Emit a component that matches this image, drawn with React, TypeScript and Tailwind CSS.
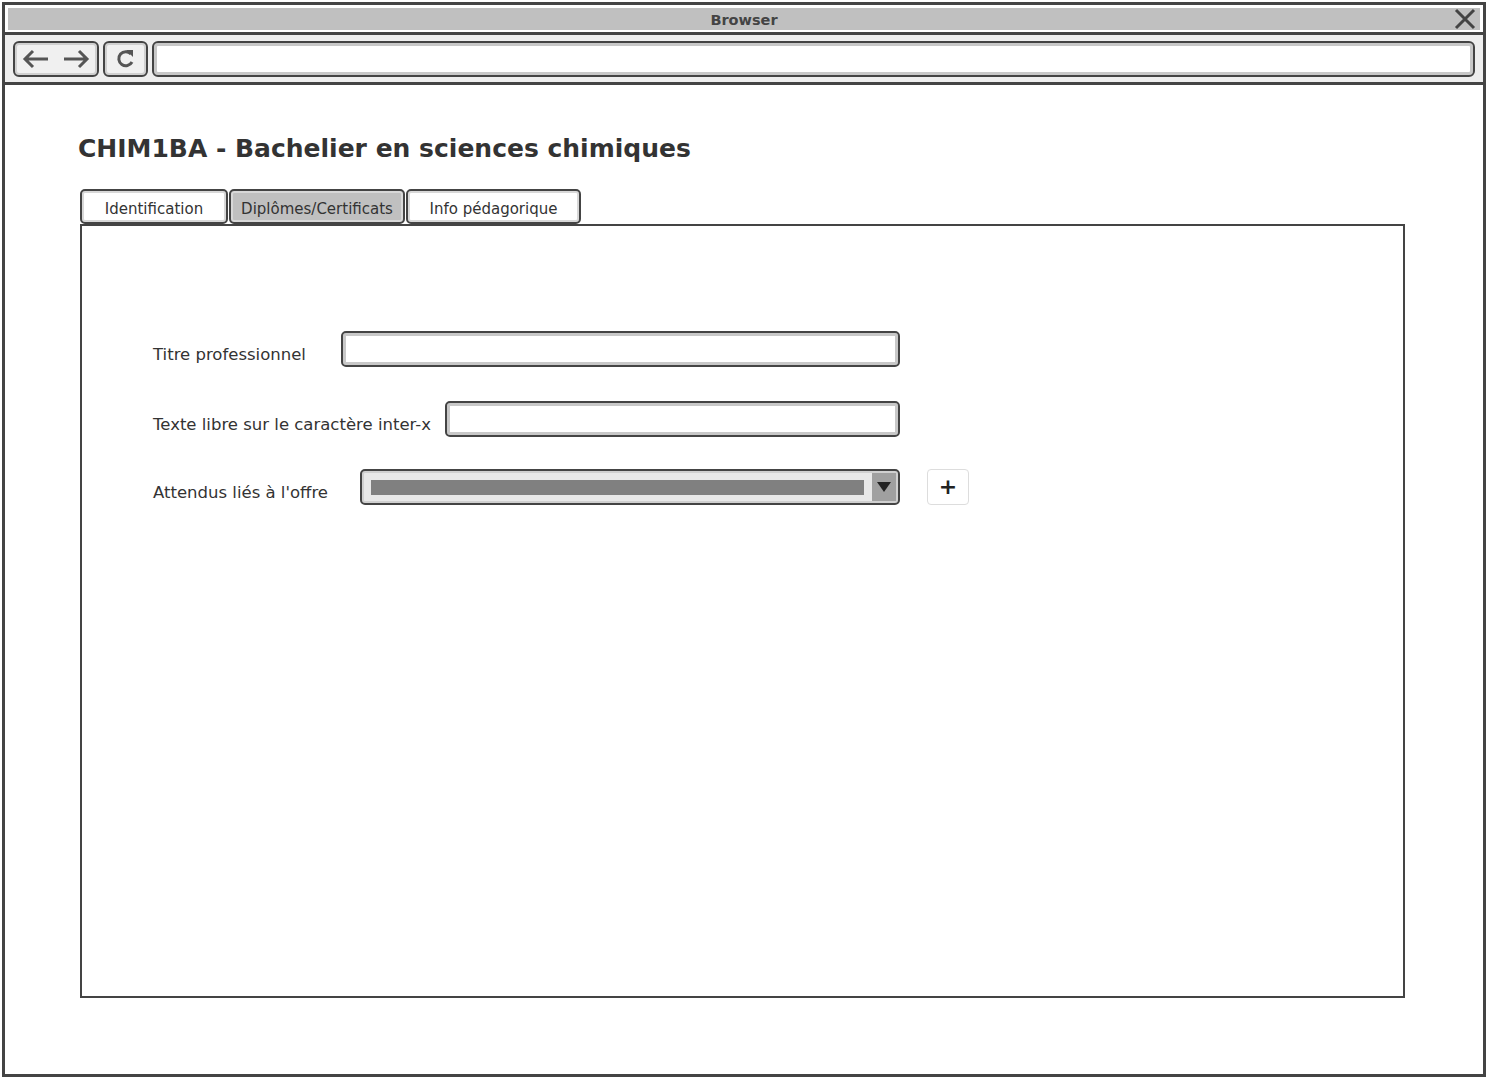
import React from "react";

const font = { fontFamily: '"Comic Sans MS", "DejaVu Sans", sans-serif' };

function Field({ className }: { className: string }) {
  return (
    <div
      className={`h-[36px] rounded-[5px] border-2 border-[#444] bg-white shadow-[inset_0_0_0_3px_#c8c8c8] ${className}`}
    />
  );
}

function Tab({ label, active }: { label: string; active?: boolean }) {
  return (
    <div
      className={`flex h-[35px] items-center justify-center rounded-[5px] border-2 border-[#444] pt-[5px] text-[15px] text-[#333] shadow-[inset_0_0_0_2px_#d8d8d8] ${
        active ? "bg-[#c0c0c0]" : "bg-white"
      }`}
    >
      {label}
    </div>
  );
}

export default function App() {
  return (
    <div className="h-[1080px] w-[1490px] bg-white pl-[2px] pt-[2px]" style={font}>
      <div className="flex h-[1075px] w-[1484px] flex-col border-[3px] border-[#444]">
        {/* title bar */}
        <div className="border-b-[3px] border-[#444] p-[3px] pb-[2px]">
          <div className="relative flex h-[22px] items-center justify-center bg-[#c0c0c0] pt-[3px] text-[14.5px] font-bold text-[#444]">
            Browser
            <svg
              className="absolute right-[4px] top-[0px]"
              width="22"
              height="22"
              viewBox="0 0 22 22"
            >
              <path d="M2 2 L20 20 M20 2 L2 20" stroke="#444" strokeWidth="3" />
            </svg>
          </div>
        </div>
        {/* toolbar */}
        <div className="flex h-[50px] items-center gap-[4px] border-b-[3px] border-[#444] bg-[#eee] pl-[8px] pr-[8px]">
          <div className="flex h-[36px] w-[86px] items-center justify-between rounded-[6px] border-2 border-[#444] bg-[#f0f0f0] px-[6px] shadow-[inset_0_0_0_2px_#d0d0d0]">
            <svg width="30" height="20" viewBox="0 0 30 20">
              <path d="M27 10 H4 M12 2 L4 10 L12 18" stroke="#555" strokeWidth="3" fill="none" />
            </svg>
            <svg width="30" height="20" viewBox="0 0 30 20">
              <path d="M3 10 H26 M18 2 L26 10 L18 18" stroke="#555" strokeWidth="3" fill="none" />
            </svg>
          </div>
          <div className="flex h-[36px] w-[45px] items-center justify-center rounded-[6px] border-2 border-[#444] bg-[#f0f0f0] shadow-[inset_0_0_0_2px_#d0d0d0]">
            <svg width="22" height="22" viewBox="0 0 22 22">
              <path d="M16 6 A7 7 0 1 0 17 14" stroke="#555" strokeWidth="3" fill="none" />
              <path d="M11 2 L18 2 L18 9 Z" fill="#555" />
            </svg>
          </div>
          <div className="h-[36px] flex-1 rounded-[6px] border-2 border-[#444] bg-white shadow-[inset_0_0_0_3px_#c8c8c8]" />
        </div>
        {/* page */}
        <div className="flex flex-1 flex-col pl-[73px] pr-[77px]">
          <h1 className="mt-[44px] text-[25px] font-bold leading-[40px] text-[#333]">
            CHIM1BA - Bachelier en sciences chimiques
          </h1>
          <div className="mt-[20px] flex pl-[2px]">
            <div className="w-[148px]">
              <Tab label="Identification" />
            </div>
            <div className="ml-[1px] w-[176px]">
              <Tab label="Diplômes/Certificats" active />
            </div>
            <div className="ml-[1px] w-[175px]">
              <Tab label="Info pédagorique" />
            </div>
          </div>
          <div className="ml-[2px] h-[774px] w-[1325px] border-2 border-[#444] pl-[71px] pt-[105px]">
            <div className="flex h-[36px] items-start text-[16.5px] text-[#333]">
              <div className="w-[188px] pt-[13px] leading-[21px]">Titre professionnel</div>
              <Field className="w-[559px]" />
            </div>
            <div className="mt-[34px] flex h-[36px] items-start text-[16.5px] text-[#333]">
              <div className="w-[292px] pt-[13px] leading-[21px]">Texte libre sur le caractère inter-x</div>
              <Field className="w-[455px]" />
            </div>
            <div className="mt-[32px] flex h-[36px] items-start text-[16.5px] text-[#333]">
              <div className="w-[207px] pt-[13px] leading-[21px]">Attendus liés à l'offre</div>
              <div className="flex h-[36px] w-[540px] items-center rounded-[5px] border-2 border-[#444] bg-[#e8e8e8] pl-[9px] pr-[2px] shadow-[inset_0_0_0_2px_#d0d0d0]">
                <div className="h-[15px] w-[493px] bg-[#808080]" />
                <div className="ml-[8px] flex h-[28px] w-[24px] items-center justify-center bg-[#a0a0a0]">
                  <svg width="14" height="12" viewBox="0 0 14 12">
                    <path d="M0 1 H14 L7 11 Z" fill="#222" />
                  </svg>
                </div>
              </div>
              <div className="ml-[27px] flex h-[36px] w-[42px] items-center justify-center rounded-[4px] border border-[#ddd] bg-white text-[22px] font-bold leading-none text-[#222]">
                +
              </div>
            </div>
          </div>
        </div>
      </div>
    </div>
  );
}
